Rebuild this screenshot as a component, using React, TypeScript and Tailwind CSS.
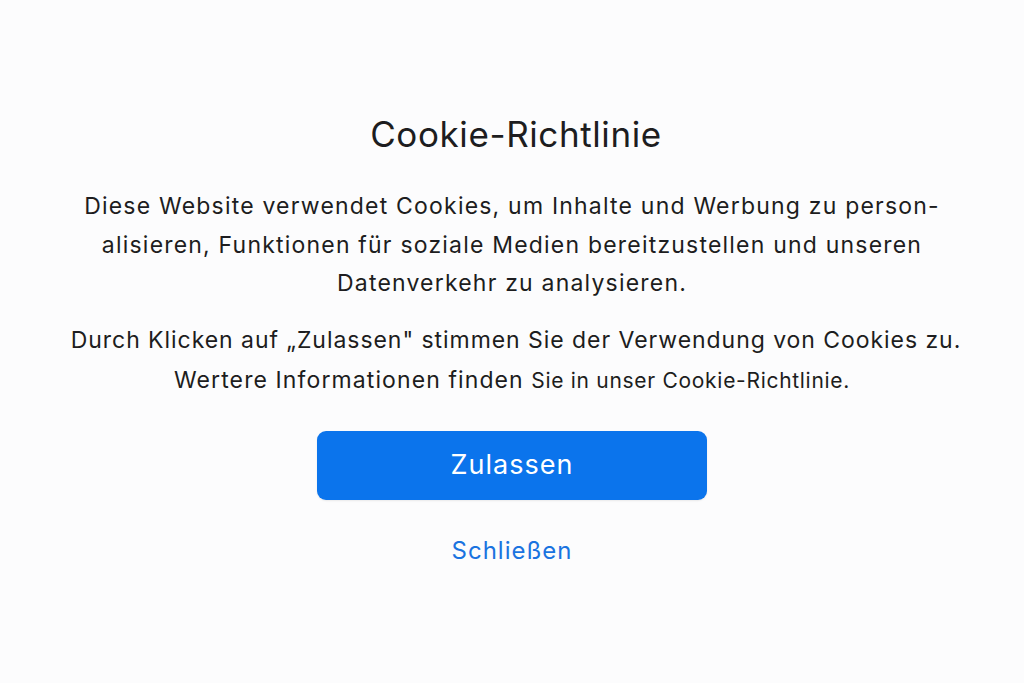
import React from 'react';

const font = { fontFamily: 'Inter, "Noto Sans", sans-serif' };

export default function App() {
  return (
    <div className="min-h-[683px] w-full bg-[#fcfcfd] flex flex-col items-center pt-[112px] text-[#1d1d20]" style={font}>
      <h1 className="text-[35px] leading-[44px] font-normal tracking-[0.6px] pl-[8px]">Cookie-Richtlinie</h1>

      <p className="mt-[31px] w-[900px] text-center text-[23px] leading-[38.5px] tracking-[1.2px]">
        Diese Website verwendet Cookies, um Inhalte und Werbung zu person-
        <br />
        alisieren, Funktionen für soziale Medien bereitzustellen und unseren
        <br />
        Datenverkehr zu analysieren.
      </p>

      <p className="mt-[17px] text-center text-[23px] leading-[40px] tracking-[0.95px] pl-[8px]">
        Durch Klicken auf „Zulassen" stimmen Sie der Verwendung von Cookies zu.
      </p>
      <p className="text-center text-[23px] leading-[40px] tracking-[1.1px]">
        Wertere Informationen finden <span className="text-[21px] tracking-[0.7px]">Sie in unser Cookie-Richtlinie.</span>
      </p>

      <button className="mt-[30px] w-[390px] h-[69px] rounded-[9px] bg-[#0b74ec] text-white text-[27px] tracking-[1px] shadow-[0_1px_2px_rgba(0,0,0,0.08)]">
        Zulassen
      </button>

      <button className="mt-[36px] text-[#1a73e0] text-[24px] leading-[30px] tracking-[1px]">Schließen</button>
    </div>
  );
}
